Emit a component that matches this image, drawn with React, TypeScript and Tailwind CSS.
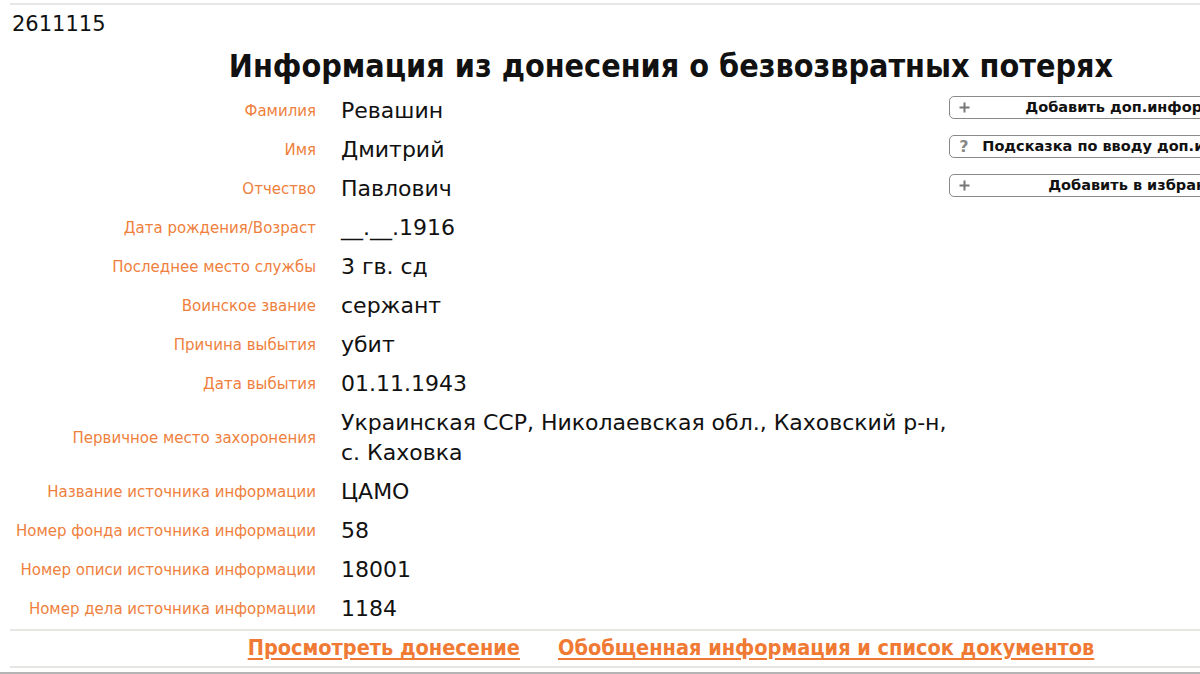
import React from 'react';

interface Row {
    label: string;
    value: React.ReactNode;
}

const rows: Row[] = [
    { label: 'Фамилия', value: 'Ревашин' },
    { label: 'Имя', value: 'Дмитрий' },
    { label: 'Отчество', value: 'Павлович' },
    { label: 'Дата рождения/Возраст', value: '__.__.1916' },
    { label: 'Последнее место службы', value: '3 гв. сд' },
    { label: 'Воинское звание', value: 'сержант' },
    { label: 'Причина выбытия', value: 'убит' },
    { label: 'Дата выбытия', value: '01.11.1943' },
    { label: 'Первичное место захоронения', value: 'Украинская ССР, Николаевская обл., Каховский р-н, с. Каховка' },
    { label: 'Название источника информации', value: 'ЦАМО' },
    { label: 'Номер фонда источника информации', value: '58' },
    { label: 'Номер описи источника информации', value: '18001' },
    { label: 'Номер дела источника информации', value: '1184' },
];

const PlusIcon = () => (
    <svg width="13" height="13" viewBox="0 0 13 13">
        <path d="M6.5 1.5v10M1.5 6.5h10" stroke="#777" strokeWidth="2" />
    </svg>
);

const SideButton: React.FC<{ icon: React.ReactNode; text: string }> = ({ icon, text }) => (
    <div className="relative flex items-center justify-center h-[23px] w-[386px] border border-[#8a8a8a] rounded-[5px] bg-white">
        <span className="absolute left-[7px] top-0 bottom-0 w-[14px] flex items-center justify-center text-[#888] font-bold text-[16px] leading-none">{icon}</span>
        <span className="text-[14.5px] font-bold text-[#111] leading-none whitespace-nowrap">{text}</span>
    </div>
);

export default function App() {
    const body = { fontFamily: '"DejaVu Sans", Verdana, sans-serif' };
    const cond = { fontFamily: '"DejaVu Sans Condensed", "DejaVu Sans", sans-serif', fontStretch: 'condensed' as const };

    return (
        <div className="w-full h-[674px] overflow-hidden bg-white relative" style={body}>
            <div className="w-[1322px] ml-[10px]">
                <div className="border-t-2 border-[#e6e6e4] mt-[3px]" />
                <div className="pl-[2px] pt-[6px] text-[21px] leading-[26px] text-[#111]">2611115</div>

                <h1 className="text-center text-[32px] font-bold leading-[40px] text-[#111] mt-[9px]" style={cond}>
                    Информация из донесения о безвозвратных потерях
                </h1>

                <div className="flex mt-[5px]">
                    <div className="w-[939px] shrink-0">
                        {rows.map(r => (
                            <div key={r.label} className="flex items-center py-[4.5px]">
                                <div className="w-[306px] text-right text-[15px] text-[#ef7f3d] leading-[20px]">{r.label}</div>
                                <div className="w-[608px] ml-[25px] text-[22px] leading-[30px] text-[#111]">{r.value}</div>
                            </div>
                        ))}
                    </div>
                    <div className="flex flex-col gap-[16px] pt-[5px] shrink-0">
                        <SideButton icon={<PlusIcon />} text="Добавить доп.информацию" />
                        <SideButton icon="?" text="Подсказка по вводу доп.информации" />
                        <SideButton icon={<PlusIcon />} text="Добавить в избранное" />
                    </div>
                </div>

                <div className="border-t-2 border-[#e6e6e2] mt-[1px]" />
                <div className="flex justify-center gap-[38px] h-[35px] items-center" style={cond}>
                    <a className="text-[21.5px] font-bold text-[#f07a33] underline underline-offset-[3px]">Просмотреть донесение</a>
                    <a className="text-[21.5px] font-bold text-[#f07a33] underline underline-offset-[3px]">Обобщенная информация и список документов</a>
                </div>
                <div className="border-t-2 border-[#e6e6e2]" />
            </div>
            <div className="absolute left-0 right-0 bottom-0 h-[2px] bg-[#b4b4b4]" />
        </div>
    );
}
